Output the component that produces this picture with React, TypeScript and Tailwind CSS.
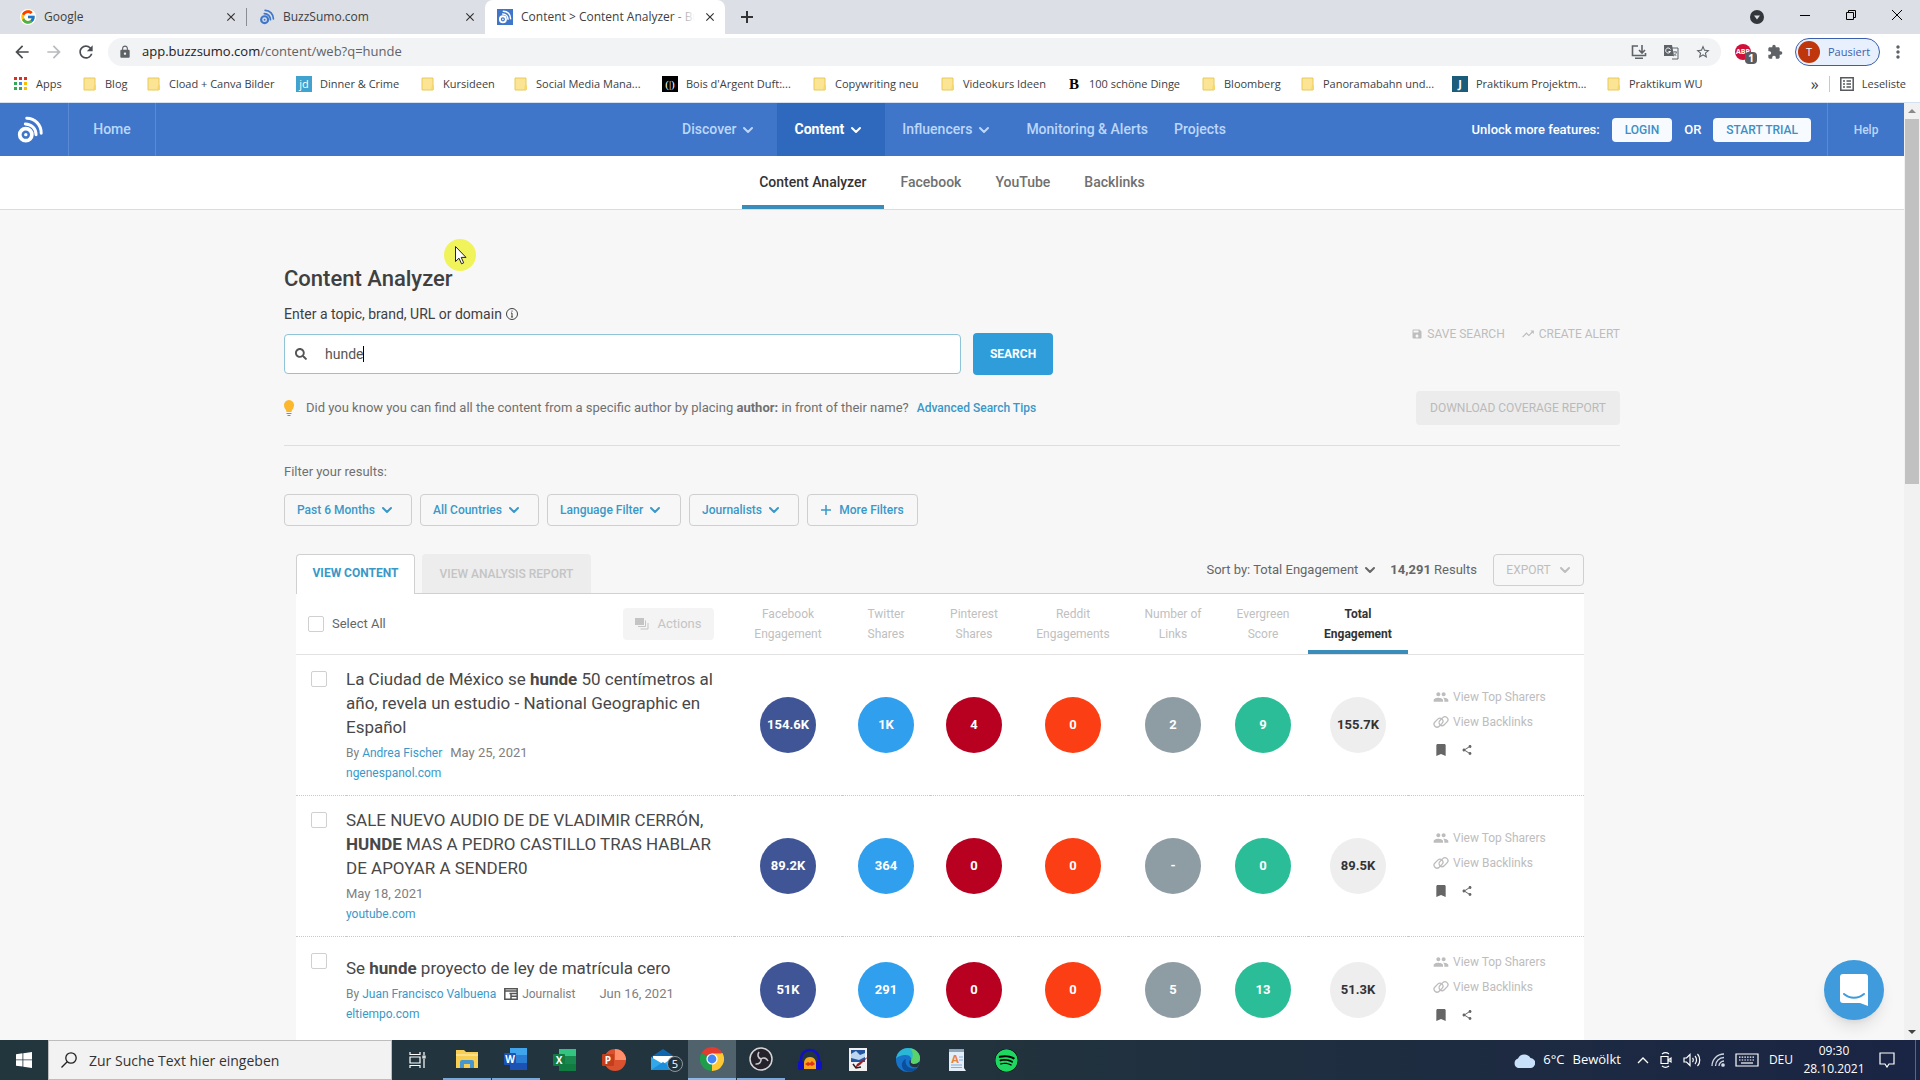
import { useState, type ReactNode } from 'react';
import { FcGoogle } from 'react-icons/fc';
import { FaSearch, FaSpotify } from 'react-icons/fa';
import {
  MdArrowBack,
  MdArrowForward,
  MdBookmark,
  MdClose,
  MdExtension,
  MdGroup,
  MdLock,
  MdMoreVert,
  MdRefresh,
  MdSave,
  MdShare,
  MdStarBorder,
  MdTrendingUp,
} from 'react-icons/md';

type IconProps = { className?: string };

/* ---------- Icons ---------- */

function BuzzLogo({ className }: IconProps) {
  return (
    <svg viewBox="0 0 28 30" className={className} fill="none" stroke="currentColor">
      <circle cx="9.5" cy="20" r="6.5" strokeWidth="4" />
      <circle cx="9.5" cy="20" r="1.8" fill="currentColor" stroke="none" />
      <path d="M9 8.5c6.5 0 11.500 5 11.500 11.500" strokeWidth="3.200" strokeLinecap="round" />
      <path d="M10.500 2.500C19.500 2.500 26 9.500 26 18.500" strokeWidth="3.200" strokeLinecap="round" />
    </svg>
  );
}

function Chevron({ className }: IconProps) {
  return (
    <svg viewBox="0 0 12 12" className={className} fill="none" stroke="currentColor" strokeWidth="2" strokeLinecap="round" strokeLinejoin="round">
      <path d="M2 4l4 4 4-4" />
    </svg>
  );
}

function LinkIcon({ className }: IconProps) {
  return (
    <svg viewBox="0 0 16 14" className={className} fill="none" stroke="currentColor" strokeWidth="1.300">
      <rect x="0.500" y="4.700" width="10" height="6" rx="3" transform="rotate(-45 5.500 7.700)" />
      <rect x="5.500" y="3.200" width="10" height="6" rx="3" transform="rotate(-45 10.500 6.200)" />
    </svg>
  );
}

function JournalistIcon({ className }: IconProps) {
  return (
    <svg viewBox="0 0 14 13" className={className} fill="none" stroke="currentColor" strokeWidth="1.500">
      <path d="M.8 1.200h12.400v10.600H.8zM.8 3.500h12.400M5.500 6h7M7.500 8.700h5M7 6v5.800" />
    </svg>
  );
}

function FolderIcon() {
  return (
    <svg viewBox="0 0 14 14" className="h-3.5 w-3.5 shrink-0">
      <path d="M1 1h11v12H1z" fill="#fbe493" stroke="#e8c95c" />
      <path d="M10 13l1-5h2v5z" fill="#f5d76b" />
    </svg>
  );
}

function AppsIcon() {
  const colors = ['#d93025', '#d93025', '#d93025', '#34a853', '#4285f4', '#fbbc04', '#34a853', '#34a853', '#fbbc04'];
  return (
    <svg viewBox="0 0 14 14" className="h-3.5 w-3.5 shrink-0">
      {colors.map((c, i) => (
        <rect key={i} x={(i % 3) * 5} y={Math.floor(i / 3) * 5} width="3" height="3" fill={c} />
      ))}
    </svg>
  );
}

/* ---------- Browser chrome ---------- */

function BrowserTab({ icon, title, active = false }: { icon: ReactNode; title: string; active?: boolean }) {
  return (
    <div className={active ? 'flex w-60 items-center gap-2 rounded-t-lg bg-white pr-2 pl-3' : 'flex w-[238px] items-center gap-2 pr-2 pl-3'}>
      {icon}
      <span className="relative flex-1 overflow-hidden whitespace-nowrap">
        {title}
        {active && <span className="absolute inset-y-0 right-0 w-6 bg-gradient-to-r from-transparent to-white" />}
      </span>
      <button type="button" aria-label="Tab schließen">
        <MdClose className="h-3.5 w-3.5 text-[#333]" />
      </button>
    </div>
  );
}

const folder = <FolderIcon />;
const bookmarks: { label: string; icon: ReactNode; width: string }[] = [
  { label: 'Apps', icon: <AppsIcon />, width: 'w-[69px]' },
  { label: 'Blog', icon: folder, width: 'w-[64px]' },
  { label: 'Cload + Canva Bilder', icon: folder, width: 'w-[149px]' },
  {
    label: 'Dinner & Crime',
    icon: <span className="flex h-4 w-4 items-center justify-center bg-[#3fa2cf] text-[11px] text-white">jd</span>,
    width: 'w-[125px]',
  },
  { label: 'Kursideen', icon: folder, width: 'w-[93px]' },
  { label: 'Social Media Mana...', icon: folder, width: 'w-[148px]' },
  {
    label: "Bois d'Argent Duft:...",
    icon: <span className="flex h-4 w-4 items-center justify-center bg-black font-['Liberation_Serif',serif] text-[11px] text-white">(|)</span>,
    width: 'w-[151px]',
  },
  { label: 'Copywriting neu', icon: folder, width: 'w-[128px]' },
  { label: 'Videokurs Ideen', icon: folder, width: 'w-[126px]' },
  {
    label: '100 schöne Dinge',
    icon: <span className="w-3.5 text-center font-['Liberation_Serif',serif] text-[15px] font-bold text-black">B</span>,
    width: 'w-[135px]',
  },
  { label: 'Bloomberg', icon: folder, width: 'w-[99px]' },
  { label: 'Panoramabahn und...', icon: folder, width: 'w-[151px]' },
  {
    label: 'Praktikum Projektm...',
    icon: <span className="flex h-4 w-4 items-center justify-center bg-[#1b5c7a] text-[11px] font-bold text-white">J</span>,
    width: 'w-[155px]',
  },
  { label: 'Praktikum WU', icon: folder, width: 'w-[110px]' },
];

function BrowserChrome() {
  return (
    <div className="shrink-0 bg-white text-[12px] text-[#3c4043]">
      {/* Tab strip */}
      <div className="flex h-[34px] items-stretch bg-[#dcdfe5] pl-2">
        <BrowserTab icon={<FcGoogle className="h-4 w-4 rounded-full bg-white" />} title="Google" />
        <span className="my-2 w-px bg-[#8a8d93]" />
        <BrowserTab icon={<BuzzLogo className="h-4 w-4 text-[#3f76c9]" />} title="BuzzSumo.com" />
        <BrowserTab
          active
          icon={
            <span className="flex h-4 w-4 items-center justify-center bg-[#3f76c9] text-white">
              <BuzzLogo className="h-3.5 w-3.5" />
            </span>
          }
          title="Content > Content Analyzer - Bu"
        />
        <button type="button" aria-label="Neuer Tab" className="ml-4 text-[#333]">
          <svg viewBox="0 0 12 12" className="h-3 w-3" stroke="currentColor" strokeWidth="2">
            <path d="M6 0v12M0 6h12" />
          </svg>
        </button>
        <div className="ml-auto flex items-center gap-9 pr-[18px] text-black">
          <svg viewBox="0 0 14 14" className="h-3.5 w-3.5">
            <circle cx="7" cy="7" r="7" fill="#33363a" />
            <path d="M4 5.500h6L7 9.500z" fill="#dcdfe5" />
          </svg>
          <button type="button" aria-label="Minimieren" className="-mt-1">
            <svg viewBox="0 0 10 10" className="h-2.5 w-2.5" stroke="currentColor">
              <path d="M0 5.500h10" />
            </svg>
          </button>
          <button type="button" aria-label="Wiederherstellen" className="-mt-1">
            <svg viewBox="0 0 10 10" className="h-2.5 w-2.5" fill="none" stroke="currentColor">
              <path d="M.5 2.500h7v7h-7zM2.500 2.500v-2h7v7h-2" />
            </svg>
          </button>
          <button type="button" aria-label="Schließen" className="-mt-1">
            <svg viewBox="0 0 10 10" className="h-2.5 w-2.5" stroke="currentColor">
              <path d="M0 0l10 10M10 0L0 10" />
            </svg>
          </button>
        </div>
      </div>

      {/* Address bar */}
      <div className="flex h-9 items-center gap-3 px-3">
        <MdArrowBack className="h-5 w-5 shrink-0 text-[#4a4d51]" />
        <MdArrowForward className="h-5 w-5 shrink-0 text-[#b9bbbe]" />
        <MdRefresh className="h-5 w-5 shrink-0 text-[#4a4d51]" />
        <div className="flex h-7 flex-1 items-center rounded-full bg-[#f1f3f4] pr-2.5 pl-2.5">
          <MdLock className="h-3.5 w-3.5 text-[#5f6368]" />
          <span className="ml-2.5 flex-1 text-[13px] text-[#5f6368]">
            <span className="text-[#202124]">app.buzzsumo.com</span>/content/web?q=hunde
          </span>
          <div className="flex gap-4 text-[#5f6368]">
            <svg viewBox="0 0 16 16" className="h-4 w-4" fill="none" stroke="currentColor" strokeWidth="1.600">
              <path d="M7 2H1.500v9.500h13V9M4 14.200h8M11 1v7.500M8 6l3 3 3-3" />
            </svg>
            <svg viewBox="0 0 16 16" className="h-4 w-4">
              <path d="M1 1h8l2 11H1z" fill="#5f6368" />
              <path d="M7 4h8v11H9" fill="none" stroke="#5f6368" />
              <path d="M7.500 5.500a2.500 2.500 0 1 0 0 2H5.500" fill="none" stroke="#fff" />
              <path d="M10 8h4M12 7v1M13.500 8c-.5 2-1.500 3-3 4M10.800 9.500l2.500 2.500" fill="none" stroke="#5f6368" strokeWidth=".8" />
            </svg>
            <MdStarBorder className="h-4 w-4" />
          </div>
        </div>
        <span className="relative ml-0.5 flex h-4 w-4 items-center justify-center rounded-full bg-[#d0103a] text-[7px] font-bold text-white">
          ABP
          <span className="absolute top-2 left-2.5 flex h-3 w-3 items-center justify-center rounded-sm bg-[#5a5d60] text-[10px]">1</span>
        </span>
        <MdExtension className="ml-1 h-4 w-4 text-[#5f6368]" />
        <button type="button" className="flex h-7 w-[85px] items-center gap-2 rounded-full border border-[#3b5fae] bg-[#e8f0fe] pl-0.5 text-[11px] text-[#3c5fb0]">
          <span className="flex h-[22px] w-[22px] items-center justify-center rounded-full bg-[#bf360c] text-white">T</span>
          Pausiert
        </button>
        <MdMoreVert className="-ml-1 h-5 w-5 text-[#5f6368]" />
      </div>

      {/* Bookmarks */}
      <nav className="flex h-[33px] items-center border-b border-[#d5e0f0] pb-1 pl-3.5 text-[11px]">
        {bookmarks.map((b) => (
          <a key={b.label} href="#" className={`${b.width} flex shrink-0 items-center gap-2 whitespace-nowrap`}>
            {b.icon}
            {b.label}
          </a>
        ))}
        <span className="ml-auto text-[16px]">»</span>
        <span className="mx-2.5 h-4 w-px bg-[#c6c9cd]" />
        <a href="#" className="flex items-center gap-2 pr-3.5">
          <svg viewBox="0 0 14 14" className="h-3.5 w-3.5" fill="none" stroke="#55585c" strokeWidth="1.500">
            <path d="M.8.8h12.400v12.400H.8zM3 4h2M3 7h2M3 10h2M6.500 4H11M6.500 7H11M6.500 10H11" />
          </svg>
          Leseliste
        </a>
      </nav>
    </div>
  );
}

/* ---------- BuzzSumo header ---------- */

function AppHeader() {
  return (
    <header className="flex h-[53px] bg-[#3f76c9] text-[14px] font-medium text-[#bcd6fa]">
      <div className="flex flex-1 basis-0">
        <a href="#" aria-label="BuzzSumo" className="flex w-[69px] items-center border-r border-[#5a8ad3] pl-4 text-white">
          <BuzzLogo className="h-7 w-7" />
        </a>
        <a href="#" className="flex w-[87px] items-center justify-center border-r border-[#5a8ad3]">Home</a>
      </div>
      <nav className="flex">
        <button type="button" className="flex items-center gap-1.5 pr-[23px] pl-[17px]">
          Discover <Chevron className="h-3 w-3" />
        </button>
        <button type="button" className="flex items-center gap-1.5 bg-[#2f69bd] pr-[23px] pl-[17px] font-bold text-white">
          Content <Chevron className="h-3 w-3" />
        </button>
        <button type="button" className="flex items-center gap-1.5 pr-[23px] pl-[17px]">
          Influencers <Chevron className="h-3 w-3" />
        </button>
        <a href="#" className="flex items-center px-[13px]">Monitoring &amp; Alerts</a>
        <a href="#" className="flex items-center px-[13px]">Projects</a>
      </nav>
      <div className="flex flex-1 basis-0 items-center justify-end text-[13px] text-white">
        <span>Unlock more features:</span>
        <button type="button" className="ml-3 h-6 rounded-sm bg-[#f7fbff] px-[13px] text-[12px] text-[#3d8fc4]">LOGIN</button>
        <span className="mx-3">OR</span>
        <button type="button" className="mr-4 h-6 rounded-sm bg-[#f7fbff] px-[13px] text-[12px] text-[#3d8fc4]">START TRIAL</button>
        <a href="#" className="flex h-full w-[77px] items-center justify-center border-l border-[#5a8ad3] text-[12px] text-[#bcd6fa]">Help</a>
      </div>
    </header>
  );
}

const subTabs = ['Content Analyzer', 'Facebook', 'YouTube', 'Backlinks'];

function SubNav() {
  return (
    <nav className="flex h-[54px] justify-center border-b border-[#dcdcdc] bg-white text-[14px] font-medium text-[#707070]">
      {subTabs.map((tab, i) => (
        <a
          key={tab}
          href="#"
          className={
            i === 0
              ? 'flex items-center border-t-4 border-b-4 border-t-transparent border-b-[#3a8dbb] px-[17px] text-[#333]'
              : 'flex items-center px-[17px]'
          }
        >
          {tab}
        </a>
      ))}
    </nav>
  );
}

/* ---------- Search ---------- */

const filters = [
  { label: 'Past 6 Months', width: 'w-32' },
  { label: 'All Countries', width: 'w-[119px]' },
  { label: 'Language Filter', width: 'w-[134px]' },
  { label: 'Journalists', width: 'w-[110px]' },
];

function SearchSection() {
  const [query, setQuery] = useState('hunde');

  return (
    <section className="text-[13px] text-[#707070]">
      <h1 className="text-[22px] leading-8 font-medium text-[#404040]">Content Analyzer</h1>
      <div className="flex justify-between">
        <div>
          <label htmlFor="query" className="mt-[7px] flex h-6 items-center gap-1 text-[14px] text-[#404040]">
            Enter a topic, brand, URL or domain
            <svg viewBox="0 0 12 12" className="h-3 w-3" fill="none" stroke="currentColor">
              <circle cx="6" cy="6" r="5.500" />
              <path d="M6 5v4M5 9h2M5 5h1M6 2.500v1.200" />
            </svg>
          </label>
          <div className="mt-[7px] flex items-center gap-3">
            <div className="flex h-10 w-[677px] items-center rounded-sm border border-[#8fc3d8] bg-white pl-2.5 text-[14px] text-[#555]">
              <FaSearch className="mr-[18px] h-3 w-3" />
              <input
                id="query"
                type="text"
                value={query}
                onChange={(e) => setQuery(e.target.value)}
                className="field-sizing-content outline-none"
              />
              <span className="h-4 w-px bg-black" />
            </div>
            <button type="button" className="h-[42px] w-20 rounded-sm bg-[#2f9dd9] text-[12px] font-bold text-white">SEARCH</button>
          </div>
        </div>
        <div className="mt-[29px] flex h-5 items-center gap-4 text-[12px] text-[#bdbdbd]">
          <button type="button" disabled className="flex items-center gap-1">
            <MdSave className="h-3 w-3" /> SAVE SEARCH
          </button>
          <button type="button" disabled className="flex items-center gap-1">
            <MdTrendingUp className="h-3.5 w-3.5" /> CREATE ALERT
          </button>
        </div>
      </div>

      <div className="mt-4 flex items-center border-b border-[#dedede] pb-5">
        <svg viewBox="0 0 10 16" className="mr-3 h-4 w-2.5">
          <path d="M5 0a5 5 0 0 0-5 5.500C0 8.500 2.500 9.500 2.500 12h5C7.500 9.500 10 8.500 10 5.500A5 5 0 0 0 5 0z" fill="#fbb72e" />
          <path d="M2.500 13h5v1h-5zM3.500 15h3v1h-3z" fill="#8a8a8a" />
        </svg>
        <p>
          Did you know you can find all the content from a specific author by placing <b>author:</b> in front of their name?
        </p>
        <a href="#" className="ml-2 text-[12px] font-medium text-[#3a98c9]">Advanced Search Tips</a>
        <button type="button" disabled className="ml-auto h-[34px] w-[204px] rounded-sm bg-[#ececec] text-[12px] text-[#bababa]">
          DOWNLOAD COVERAGE REPORT
        </button>
      </div>

      <p className="mt-4 leading-5">Filter your results:</p>
      <div className="mt-3 flex gap-2 text-[12px] font-medium text-[#3a98c9]">
        {filters.map((f) => (
          <button key={f.label} type="button" className={`${f.width} flex h-8 items-center gap-1.5 rounded-sm border border-[#cfcfcf] pl-3`}>
            {f.label} <Chevron className="h-3 w-3" />
          </button>
        ))}
        <button type="button" className="flex h-8 w-[111px] items-center justify-center gap-2 rounded-sm border border-[#cfcfcf]">
          <svg viewBox="0 0 10 10" className="h-2.5 w-2.5" stroke="currentColor" strokeWidth="1.500">
            <path d="M5 0v10M0 5h10" />
          </svg>
          More Filters
        </button>
      </div>
    </section>
  );
}

/* ---------- Results ---------- */

interface Result {
  title: ReactNode;
  author?: string;
  journalist?: boolean;
  date: string;
  domain: string;
  stats: string[];
}

const results: Result[] = [
  {
    title: <>La Ciudad de México se <b>hunde</b> 50 centímetros al año, revela un estudio - National Geographic en Español</>,
    author: 'Andrea Fischer',
    date: 'May 25, 2021',
    domain: 'ngenespanol.com',
    stats: ['154.6K', '1K', '4', '0', '2', '9', '155.7K'],
  },
  {
    title: <>SALE NUEVO AUDIO DE DE VLADIMIR CERRÓN, <b>HUNDE</b> MAS A PEDRO CASTILLO TRAS HABLAR DE APOYAR A SENDER0</>,
    date: 'May 18, 2021',
    domain: 'youtube.com',
    stats: ['89.2K', '364', '0', '0', '-', '0', '89.5K'],
  },
  {
    title: <>Se <b>hunde</b> proyecto de ley de matrícula cero</>,
    author: 'Juan Francisco Valbuena',
    journalist: true,
    date: 'Jun 16, 2021',
    domain: 'eltiempo.com',
    stats: ['51K', '291', '0', '0', '5', '13', '51.3K'],
  },
];

const columns = [
  { lines: ['Facebook', 'Engagement'], width: 'w-[108px]', color: 'bg-[#3f5596] text-white' },
  { lines: ['Twitter', 'Shares'], width: 'w-[88px]', color: 'bg-[#2f9fee] text-white' },
  { lines: ['Pinterest', 'Shares'], width: 'w-[88px]', color: 'bg-[#b80021] text-white' },
  { lines: ['Reddit', 'Engagements'], width: 'w-[110px]', color: 'bg-[#fb3e13] text-white' },
  { lines: ['Number of', 'Links'], width: 'w-[90px]', color: 'bg-[#8e9ca3] text-white' },
  { lines: ['Evergreen', 'Score'], width: 'w-[90px]', color: 'bg-[#2bbd98] text-white' },
  { lines: ['Total', 'Engagement'], width: 'w-[100px]', color: 'bg-[#eeeeee] text-[#333]' },
];

const checkbox = 'block h-4 w-4 shrink-0 appearance-none rounded-xs border border-[#d0d0d0] bg-white';

function ResultRow({ result, index }: { result: Result; index: number }) {
  return (
    <tr className="border-b border-dotted border-[#c8c8c8]">
      <td className="pt-4 pl-[15px] align-top">
        <input type="checkbox" aria-label={`Select result ${index + 1}`} className={checkbox} />
      </td>
      <td className="py-3 pr-5">
        <h2 className="text-[17px] leading-6 text-[#484848]">{result.title}</h2>
        <p className="mt-1 flex h-5 items-center text-[12px] text-[#808080]">
          {result.author && (
            <span className="mr-2">
              By <a href="#" className="text-[#3a98c9]">{result.author}</a>
            </span>
          )}
          {result.journalist && (
            <span className="mr-6 flex items-center gap-1">
              <JournalistIcon className="h-3.5 w-3.5 text-[#555]" /> Journalist
            </span>
          )}
          <time className="text-[13px]">{result.date}</time>
        </p>
        <a href="#" className="block text-[12px] leading-5 text-[#3a98c9]">{result.domain}</a>
      </td>
      {result.stats.map((value, i) => (
        <td key={columns[i].lines.join()}>
          <span className={`mx-auto flex h-14 w-14 items-center justify-center rounded-full font-bold ${columns[i].color}`}>{value}</span>
        </td>
      ))}
      <td className="py-3 pl-[25px] text-[12px] text-[#bdbdbd]">
        <a href="#" className="flex h-[25px] items-center gap-1">
          <MdGroup className="h-4 w-4" /> View Top Sharers
        </a>
        <a href="#" className="flex h-[25px] items-center gap-1">
          <LinkIcon className="h-3.5 w-4" /> View Backlinks
        </a>
        <div className="flex h-8 items-center gap-3 text-[#666]">
          <button type="button" aria-label="Bookmark"><MdBookmark className="h-4 w-4" /></button>
          <button type="button" aria-label="Share"><MdShare className="h-3 w-3" /></button>
        </div>
      </td>
    </tr>
  );
}

function Results() {
  return (
    <section className="mt-7 mr-9 ml-3 text-[13px] text-[#666]">
      <div className="flex h-[39px] items-stretch">
        <button type="button" className="z-10 -mb-px w-[119px] rounded-t-sm border border-b-0 border-[#d0d0d0] bg-white pb-1 text-[12px] font-bold text-[#3a98c9]">
          VIEW CONTENT
        </button>
        <button type="button" disabled className="ml-[7px] w-[169px] rounded-t-sm bg-[#ededed] text-[12px] font-medium text-[#c4c4c4]">
          VIEW ANALYSIS REPORT
        </button>
        <div className="mb-[7px] ml-auto flex items-center">
          <button type="button" className="flex items-center gap-1.5">
            Sort by: Total Engagement <Chevron className="h-3 w-3" />
          </button>
          <span className="mr-4 ml-3.5"><b>14,291</b> Results</span>
          <button type="button" disabled className="flex h-8 w-[91px] items-center justify-center gap-2 rounded-sm border border-[#d0d0d0] text-[12px] text-[#bdbdbd]">
            EXPORT <Chevron className="h-3 w-3" />
          </button>
        </div>
      </div>

      <table className="w-full table-fixed border-collapse border-t border-[#d0d0d0] bg-white">
        <colgroup>
          <col className="w-[50px]" />
          <col />
          {columns.map((c) => (
            <col key={c.lines.join()} className={c.width} />
          ))}
          <col className="w-44" />
        </colgroup>
        <thead>
          <tr className="h-[61px] border-b border-[#e2e2e2]">
            <th colSpan={2} className="pr-5 pl-3 font-normal">
              <div className="flex items-center justify-between">
                <label className="flex items-center gap-2">
                  <input type="checkbox" className={checkbox} /> Select All
                </label>
                <button type="button" disabled className="flex h-8 w-[91px] items-center justify-center gap-2 rounded-sm bg-[#f4f4f4] text-[#c4c4c4]">
                  <svg viewBox="0 0 14 12" className="h-3 w-3.5">
                    <path d="M0 0h9v7H0z" fill="currentColor" />
                    <path d="M10.500 2.500v6H3M13 5v6H5.500" fill="none" stroke="currentColor" />
                  </svg>
                  Actions
                </button>
              </div>
            </th>
            {columns.map((c, i) => (
              <th
                key={c.lines.join()}
                className={
                  i === columns.length - 1
                    ? 'text-center text-[12px] leading-5 font-bold text-[#333] shadow-[inset_0_-4px_0_#3a8dbb]'
                    : 'text-center text-[12px] leading-5 font-normal text-[#c0c0c0]'
                }
              >
                {c.lines[0]}
                <br />
                {c.lines[1]}
              </th>
            ))}
            <td />
          </tr>
        </thead>
        <tbody>
          {results.map((r, i) => (
            <ResultRow key={r.domain} result={r} index={i} />
          ))}
        </tbody>
      </table>
    </section>
  );
}

/* ---------- Windows taskbar ---------- */

function OfficeIcon({ letter, dark, mid, light }: { letter: string; dark: string; mid: string; light: string }) {
  return (
    <svg viewBox="0 0 24 24" className="h-6 w-6">
      <path d="M6 1h17v7H6z" fill={light} />
      <path d="M6 8h17v8H6z" fill={mid} />
      <path d="M6 16h17v7H6z" fill={dark} />
      <rect x="0" y="6" width="12" height="12" rx="1" fill={dark} />
      <text x="6" y="16" textAnchor="middle" fontSize="10" fontWeight="700" fill="#fff">{letter}</text>
    </svg>
  );
}

const taskbarApps: { name: string; icon: ReactNode; state?: 'open' | 'active' }[] = [
  {
    name: 'Taskansicht',
    icon: (
      <svg viewBox="0 0 18 18" className="h-[18px] w-[18px]" fill="none" stroke="#fff" strokeWidth="1.200">
        <path d="M1 1v2.500h10V1M1 17v-2.500h10V17M1 6h10v6H1zM15 1v3M15 8v9M14 5h2v2h-2z" />
      </svg>
    ),
  },
  {
    name: 'Explorer',
    state: 'open',
    icon: (
      <svg viewBox="0 0 24 22" className="h-[22px] w-6">
        <path d="M1 2h8l2 2h12v16H1z" fill="#f8cf53" />
        <path d="M1 6h22v2H1z" fill="#fce08a" />
        <path d="M5 20v-6a2 2 0 0 1 2-2h10a2 2 0 0 1 2 2v6h-4v-4H9v4z" fill="#4697cf" />
      </svg>
    ),
  },
  { name: 'Word', state: 'open', icon: <OfficeIcon letter="W" dark="#1b52b3" mid="#2b7cd3" light="#41a5ee" /> },
  { name: 'Excel', icon: <OfficeIcon letter="X" dark="#107c41" mid="#18884f" light="#33c481" /> },
  {
    name: 'PowerPoint',
    icon: (
      <svg viewBox="0 0 24 24" className="h-6 w-6">
        <circle cx="13" cy="12" r="11" fill="#d9512f" />
        <path d="M13 1a11 11 0 0 1 11 11H13z" fill="#ff8f6b" />
        <rect x="0" y="6" width="12" height="12" rx="1" fill="#c43e1c" />
        <text x="6" y="16" textAnchor="middle" fontSize="10" fontWeight="700" fill="#fff">P</text>
      </svg>
    ),
  },
  {
    name: 'Mail',
    icon: (
      <span className="relative">
        <svg viewBox="0 0 24 24" className="h-6 w-6">
          <path d="M0 9l12-8 12 8v13H0z" fill="#0f66ae" />
          <path d="M2 8h20v8H2z" fill="#fff" />
          <path d="M0 9l12 7 12-7v13H0z" fill="#31a8ea" />
          <path d="M0 22l12-8 12 8z" fill="#1b8fdc" />
        </svg>
        <span className="absolute top-2 left-4 flex h-4 w-4 items-center justify-center rounded-full border border-[#8d989e] bg-[#22333d] text-[11px] text-white">5</span>
      </span>
    ),
  },
  {
    name: 'Chrome',
    state: 'active',
    icon: (
      <svg viewBox="0 0 24 24" className="h-6 w-6">
        <path d="M12 12L1.600 6A12 12 0 0 1 22.400 6z" fill="#e33b2e" />
        <path d="M12 12L22.400 6A12 12 0 0 1 12 24z" fill="#fcc934" />
        <path d="M12 12v12A12 12 0 0 1 1.600 6z" fill="#1e9e4b" />
        <path d="M12 6.500h10.700L17 15l-5 9 .5-8z" fill="#fcc934" />
        <circle cx="12" cy="12" r="5.600" fill="#fff" />
        <circle cx="12" cy="12" r="4.400" fill="#4285f4" />
      </svg>
    ),
  },
  {
    name: 'OBS',
    state: 'open',
    icon: (
      <svg viewBox="0 0 24 24" className="h-6 w-6">
        <circle cx="12" cy="12" r="11" fill="#25222b" stroke="#d5d5d5" strokeWidth="1.500" />
        <g fill="none" stroke="#c9c9cc" strokeWidth="1.600">
          <path d="M12 12c-3-1-4-4-2-7" />
          <path d="M12 12c2.500-2 5.500-1 7 2" />
          <path d="M12 12c.5 3-2 5.500-5.500 5" />
        </g>
      </svg>
    ),
  },
  {
    name: 'Audacity',
    icon: (
      <svg viewBox="0 0 24 24" className="h-6 w-6">
        <path d="M6 21c-1-8 1-12 6-12s7 4 6 12z" fill="#f6a81c" />
        <path d="M7 16l3-2 2 1 2-2 3 3-3 2-2-1-2 1z" fill="#e2321c" />
        <path d="M3 17V11a9 9 0 0 1 18 0v6" fill="none" stroke="#1010c8" strokeWidth="2.500" />
        <rect x="0" y="13" width="6" height="9" rx="2" fill="#1010c8" />
        <rect x="18" y="13" width="6" height="9" rx="2" fill="#1010c8" />
      </svg>
    ),
  },
  {
    name: 'Bildbearbeitung',
    icon: (
      <svg viewBox="0 0 20 24" className="h-6 w-5">
        <path d="M0 0h18v23H0z" fill="#f1f1f1" />
        <path d="M2 2h14v12H2z" fill="#2456a0" />
        <path d="M2 6l5-3 4 4 5-2v4l-6 3-8-2z" fill="#bcd7ef" />
        <path d="M20 8l-9 9-5 3 2-4z" fill="#9c1c22" />
        <path d="M4 16l3 4 5-1" fill="none" stroke="#222" strokeWidth="1.500" />
      </svg>
    ),
  },
  {
    name: 'Edge',
    icon: (
      <svg viewBox="0 0 24 24" className="h-6 w-6">
        <circle cx="12" cy="12" r="12" fill="#1673c9" />
        <path d="M0 11C1 4 6 0 12 0c7 0 12 5 12 10 0 4-3 6-6 6-2 0-4-1-3-3 1-3-1-6-5-6-5 0-9 2-10 4z" fill="#2ab7d6" />
        <path d="M14 .2C20 1 24 5.500 24 10c0 4-3 6-6 6-2 0-4-1-3-3 2-4 3-8-1-12.800z" fill="#5ad36b" />
        <path d="M10 11c-2 6 3 11 11 9-3 4-9 5-13 2-4-4-2-10 2-11z" fill="#0b4f9c" />
        <path d="M15 13c-1 2 1 3 3 3 2.500 0 4-1 5-2l.8 0c-.4 2-1.500 4.500-2.800 5-6 1.500-9-3-7-7z" fill="#22333d" />
      </svg>
    ),
  },
  {
    name: 'WordPad',
    icon: (
      <svg viewBox="0 0 18 22" className="h-[22px] w-[18px]">
        <path d="M1 0h15v19l2 3H1z" fill="#e4eef8" />
        <path d="M1 0h15v3H1z" fill="#8fa6bb" />
        <path d="M3 16h11M3 18.500h11M11 8h4M11 11h4" stroke="#7fb0dc" />
        <text x="7" y="14" textAnchor="middle" fontSize="11" fontWeight="700" fill="#e8833a">A</text>
      </svg>
    ),
  },
  { name: 'Spotify', icon: <FaSpotify className="h-[23px] w-[23px] rounded-full bg-black text-[#1ed760]" /> },
];

const appState = {
  open: 'border-b-2 border-[#76a9dc]',
  active: 'border-b-2 border-[#8ab9e8] bg-[#50626b]',
};

function Taskbar() {
  return (
    <footer className="flex h-10 shrink-0 bg-gradient-to-r from-[#22363e] via-[#22333d] to-[#1a2444] text-white">
      <button type="button" aria-label="Start" className="flex w-12 items-center justify-center">
        <svg viewBox="0 0 16 16" className="h-4 w-4" fill="#fff">
          <path d="M0 2.200l6.500-.9v6.200H0zM7.300 1.200L16 0v7.500H7.300zM0 8.300h6.500v6.200L0 13.700zM7.300 8.300H16V16l-8.700-1.200z" />
        </svg>
      </button>
      <label className="flex w-[344px] items-center border border-[#bdbdbd] bg-[#f2f2f2] pl-3">
        <svg viewBox="0 0 16 16" className="mr-3 h-4 w-4" fill="none" stroke="#222" strokeWidth="1.300">
          <circle cx="10" cy="6" r="5.200" />
          <path d="M6.200 9.800L.5 15.500" />
        </svg>
        <input
          type="text"
          aria-label="Suche"
          placeholder="Zur Suche Text hier eingeben"
          className="flex-1 text-[14px] outline-none placeholder:text-[#333]"
        />
      </label>
      <div className="flex gap-px pl-0.5">
        {taskbarApps.map((app) => (
          <button
            key={app.name}
            type="button"
            aria-label={app.name}
            className={`flex w-12 items-center justify-center ${app.state ? appState[app.state] : ''}`}
          >
            {app.icon}
          </button>
        ))}
      </div>

      {/* Tray */}
      <div className="ml-auto flex items-center text-[13px]">
        <svg viewBox="0 0 22 16" className="mr-2 h-4 w-[22px]">
          <path d="M5 16a5 5 0 0 1 0-9.500A7 7 0 0 1 17.500 6 5 5 0 0 1 17 16z" fill="#c9e0fa" />
        </svg>
        <span>6°C</span>
        <span className="ml-2">Bewölkt</span>
        <div className="ml-4 flex items-center gap-2.5">
          <svg viewBox="0 0 12 8" className="h-2 w-3" fill="none" stroke="#fff" strokeWidth="1.300">
            <path d="M1 7l5-5 5 5" />
          </svg>
          <svg viewBox="0 0 14 16" className="h-4 w-3.5" fill="none" stroke="#fff" strokeWidth="1.200">
            <path d="M2 4.500h7v7H2zM9 8l3-2v4zM3 2c2-1.500 5-1.500 7 0M3 14c2 1.500 5 1.500 7 0" />
          </svg>
          <svg viewBox="0 0 18 14" className="h-3.5 w-[18px]" fill="none" stroke="#fff" strokeWidth="1.200">
            <path d="M1 5h2.500L7 1.500v11L3.500 9H1zM9.500 5c1 1 1 3 0 4M12 3c2 2 2 6 0 8M14.500 1c3 3 3 9 0 12" />
          </svg>
          <svg viewBox="0 0 14 14" className="h-3.5 w-3.5" fill="none" stroke="#cfd5e2" strokeWidth="1.300">
            <path d="M1 13A12 12 0 0 1 13 1M4.500 13A8.500 8.500 0 0 1 13 4.500M8 13a5 5 0 0 1 5-5" />
            <circle cx="12" cy="12" r="1.200" fill="#fff" />
          </svg>
          <svg viewBox="0 0 24 14" className="h-3.5 w-6" fill="none" stroke="#fff" strokeWidth="1.200">
            <path d="M1 1h22v12H1z" />
            <path d="M4 4.200h16M4 7h16" strokeDasharray="1.500 1.200" />
            <path d="M6 10h12" />
          </svg>
          <span className="text-[12px]">DEU</span>
        </div>
        <time className="ml-2 flex w-[66px] flex-col text-center text-[12px] leading-[18px]">
          <span>09:30</span>
          <span>28.10.2021</span>
        </time>
        <svg viewBox="0 0 16 16" className="mr-5 ml-3 h-4 w-4" fill="none" stroke="#fff" strokeWidth="1.200">
          <path d="M1 1h14v11h-5l-2 3-2-3H1z" />
        </svg>
        <span className="mr-1 h-10 w-px bg-[#5d6782]" />
      </div>
    </footer>
  );
}

/* ---------- Page ---------- */

export default function App() {
  return (
    <div className="relative flex h-screen flex-col overflow-hidden font-['Open_Sans',sans-serif]">
      <BrowserChrome />

      <div className="relative flex min-h-0 flex-1">
        <main className="flex-1 overflow-hidden bg-[#f7f7f7] font-['Roboto',sans-serif]">
          <AppHeader />
          <SubNav />
          <div className="mx-auto max-w-[1336px] pt-[53px]">
            <SearchSection />
            <Results />
          </div>
        </main>

        {/* Scrollbar */}
        <div className="flex w-4 flex-col items-center bg-[#f1f1f1]">
          <svg viewBox="0 0 16 16" className="h-4 w-4 shrink-0"><path d="M4 10l4-4 4 4z" fill="#8a8a8a" /></svg>
          <div className="h-[39%] w-3.5 bg-[#c1c1c1]" />
          <svg viewBox="0 0 16 16" className="mt-auto h-4 w-4 shrink-0"><path d="M4 6l4 4 4-4z" fill="#444" /></svg>
        </div>

        {/* Support chat launcher */}
        <button
          type="button"
          aria-label="Chat"
          className="absolute right-9 bottom-5 flex h-15 w-15 items-center justify-center rounded-full bg-[#3f9bdc] shadow-lg"
        >
          <svg viewBox="0 0 28 32" className="h-8 w-7">
            <path d="M3 0h22a3 3 0 0 1 3 3v29l-8-3H3a3 3 0 0 1-3-3V3a3 3 0 0 1 3-3z" fill="#fff" />
            <path d="M4 20c6 5 14 5 20 0" fill="none" stroke="#3f9bdc" strokeWidth="2" strokeLinecap="round" />
          </svg>
        </button>
      </div>

      <Taskbar />

      {/* Mouse pointer with highlight */}
      <div className="pointer-events-none absolute top-[239px] left-[444px] h-8 w-8 rounded-full bg-[#f1f35a]">
        <svg viewBox="0 0 12 19" className="mt-[7px] ml-[11px] h-[19px] w-3">
          <path d="M.5.5v15l3.500-3.300 2.500 5.600 2.200-1-2.500-5.400H11z" fill="#fff" stroke="#222" />
        </svg>
      </div>
    </div>
  );
}
